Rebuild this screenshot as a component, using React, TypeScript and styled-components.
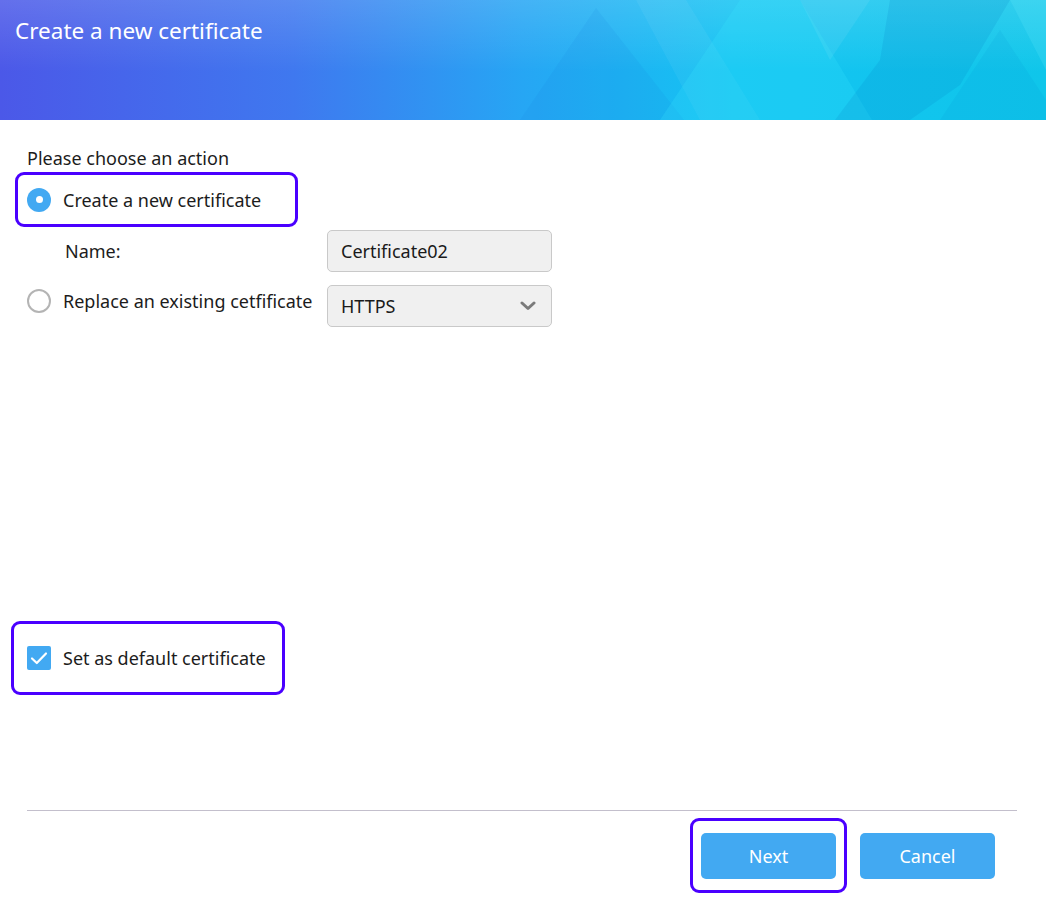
import styled, { createGlobalStyle } from "styled-components";

const GlobalStyle = createGlobalStyle`
  html, body {
    margin: 0;
    padding: 0;
    background: #ffffff;
  }
  body {
    font-family: "Noto Sans", "Open Sans", sans-serif;
    color: #1c1c1c;
  }
`;

const accent = "#42a9f2";
const mark = "#4a00ff";

const Dialog = styled.div`
  width: 1046px;
  height: 898px;
  display: flex;
  flex-direction: column;
  background: #fff;
  overflow: hidden;
`;

const Header = styled.header`
  position: relative;
  height: 120px;
  flex-shrink: 0;
  background:
    linear-gradient(to bottom, rgba(255, 255, 255, 0.14), rgba(255, 255, 255, 0) 60%),
    linear-gradient(to right, #4b58e8 0%, #3f78ef 28%, #26a6f4 50%, #14c3f2 70%, #0fc6ea 100%);
`;

const HeaderArt = styled.svg`
  position: absolute;
  inset: 0;
  pointer-events: none;
`;

const Title = styled.h1`
  position: relative;
  margin: 0;
  padding: 16px 15px 0;
  font-size: 22.5px;
  font-weight: 400;
  line-height: 30px;
  color: #fff;
`;

const Body = styled.main`
  flex: 1;
  display: flex;
  flex-direction: column;
  padding: 26px 0 0 27px;
`;

const Heading = styled.div`
  font-size: 18px;
  line-height: 24px;
`;

const Marked = styled.div<{ $height: number; $padLeft: number; $padRight: number; $shift: number; $top: number }>`
  box-sizing: border-box;
  display: inline-flex;
  align-items: center;
  align-self: flex-start;
  height: ${(p) => p.$height}px;
  padding: 0 ${(p) => p.$padRight}px 0 ${(p) => p.$padLeft}px;
  margin-left: -${(p) => p.$shift}px;
  margin-top: ${(p) => p.$top}px;
  border: 3px solid ${mark};
  border-radius: 9px;
`;

const Option = styled.label`
  display: flex;
  align-items: center;
  gap: 12px;
  font-size: 18px;
  line-height: 24px;
  white-space: nowrap;
`;

const Radio = styled.span<{ $checked?: boolean }>`
  box-sizing: border-box;
  width: 24px;
  height: 24px;
  border-radius: 50%;
  flex-shrink: 0;
  display: flex;
  align-items: center;
  justify-content: center;
  background: ${(p) => (p.$checked ? accent : "#fff")};
  border: ${(p) => (p.$checked ? "none" : "2px solid #b4b4b4")};
  &::after {
    content: "";
    display: ${(p) => (p.$checked ? "block" : "none")};
    width: 7px;
    height: 7px;
    border-radius: 50%;
    background: #fff;
  }
`;

const Checkbox = styled.span`
  width: 24px;
  height: 24px;
  border-radius: 2px;
  background: ${accent};
  display: flex;
  align-items: center;
  justify-content: center;
  flex-shrink: 0;
`;

const FieldRow = styled.div<{ $gap: number; $align?: string }>`
  display: flex;
  align-items: ${(p) => p.$align ?? "center"};
  margin-top: ${(p) => p.$gap}px;
`;

const FieldLabel = styled.div<{ $indent?: number; $padTop?: number }>`
  width: 300px;
  box-sizing: border-box;
  padding-left: ${(p) => p.$indent ?? 0}px;
  padding-top: ${(p) => p.$padTop ?? 0}px;
  font-size: 18px;
  line-height: 24px;
`;

const Field = styled.div`
  box-sizing: border-box;
  width: 225px;
  height: 42px;
  display: flex;
  align-items: center;
  justify-content: space-between;
  padding: 0 15px 0 13px;
  background: #f0f0f0;
  border: 1px solid #c9c9c9;
  border-radius: 5px;
  font-size: 18px;
  color: #1a1a1a;
`;

const Footer = styled.footer`
  flex-shrink: 0;
  padding: 0 29px 5px 27px;
`;

const Divider = styled.hr`
  margin: 0;
  border: none;
  border-top: 1px solid #c3bfcc;
`;

const Actions = styled.div`
  display: flex;
  justify-content: flex-end;
  align-items: flex-start;
  gap: 13px;
  margin-top: 7px;
  padding-right: 22px;
`;

const ButtonMark = styled.div`
  box-sizing: border-box;
  height: 75px;
  padding: 12px 8px 11px;
  border: 3px solid ${mark};
  border-radius: 9px;
  display: flex;
  align-items: flex-start;
`;

const Button = styled.button<{ $offset?: number }>`
  width: 135px;
  height: 46px;
  margin-top: ${(p) => p.$offset ?? 0}px;
  border: none;
  border-radius: 5px;
  background: ${accent};
  color: #fff;
  font-family: inherit;
  font-size: 18px;
  cursor: pointer;
`;

const Chevron = () => (
  <svg width="16" height="10" viewBox="0 0 16 10">
    <path d="M2 2 L8 7.5 L14 2" fill="none" stroke="#7a7a7a" strokeWidth="3" strokeLinecap="round" strokeLinejoin="round" />
  </svg>
);

const Check = () => (
  <svg width="18" height="14" viewBox="0 0 18 14">
    <path d="M2 7.5 L6.8 12 L16 2.5" fill="none" stroke="#fff" strokeWidth="2.2" strokeLinecap="round" strokeLinejoin="round" />
  </svg>
);

export default function App() {
  return (
    <>
      <GlobalStyle />
      <Dialog>
        <Header>
          <HeaderArt width="1046" height="120" viewBox="0 0 1046 120">
            <polygon points="596,8 520,120 684,120" fill="rgba(20,120,220,0.10)" />
            <polygon points="636,0 686,0 760,120 700,120" fill="rgba(255,255,255,0.05)" />
            <polygon points="740,0 800,0 872,120 660,120" fill="rgba(60,235,255,0.2)" />
            <polygon points="800,0 870,0 830,60" fill="rgba(255,255,255,0.07)" />
            <polygon points="890,0 1010,0 960,85 910,120 835,120 880,60" fill="rgba(0,110,190,0.14)" />
            <polygon points="1010,0 1046,0 1046,70" fill="rgba(120,240,255,0.16)" />
            <polygon points="940,120 1000,30 1046,100 1046,120" fill="rgba(0,140,210,0.1)" />
          </HeaderArt>
          <Title>Create a new certificate</Title>
        </Header>

        <Body>
          <Heading>Please choose an action</Heading>
          <Marked $height={55} $padLeft={9} $padRight={34} $shift={12} $top={2}>
            <Option>
              <Radio $checked />
              Create a new certificate
            </Option>
          </Marked>

          <FieldRow $gap={3}>
            <FieldLabel $indent={38}>Name:</FieldLabel>
            <Field>Certificate02</Field>
          </FieldRow>

          <FieldRow $gap={13} $align="flex-start">
            <FieldLabel $padTop={4}>
              <Option>
                <Radio />
                Replace an existing cetfificate
              </Option>
            </FieldLabel>
            <Field>
              HTTPS
              <Chevron />
            </Field>
          </FieldRow>

          <Marked $height={74} $padLeft={13} $padRight={16} $shift={16} $top={294}>
            <Option>
              <Checkbox>
                <Check />
              </Checkbox>
              Set as default certificate
            </Option>
          </Marked>
        </Body>

        <Footer>
          <Divider />
          <Actions>
            <ButtonMark>
              <Button>Next</Button>
            </ButtonMark>
            <Button $offset={15}>Cancel</Button>
          </Actions>
        </Footer>
      </Dialog>
    </>
  );
}
